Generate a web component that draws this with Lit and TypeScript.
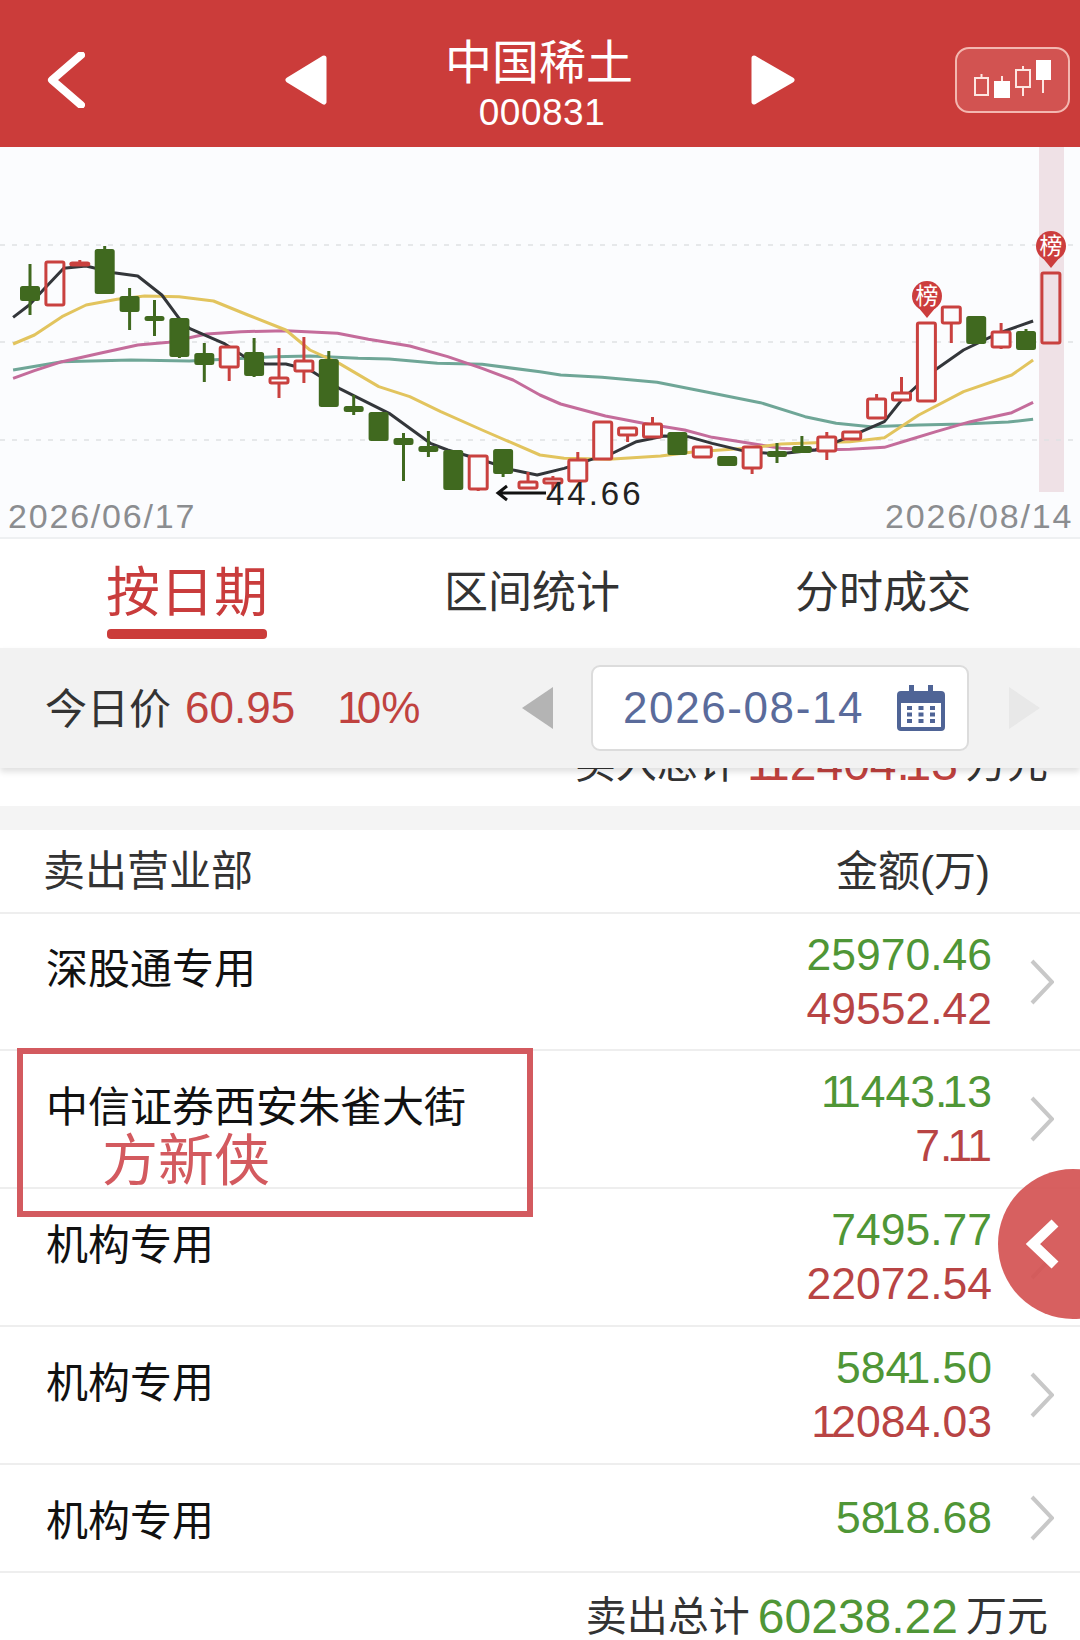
import { LitElement, html, svg, css } from "lit";
import { customElement } from "lit/decorators.js";
import { styleMap } from "lit/directives/style-map.js";

type Pt = [number, number];

// points were read off the left / right half of the chart
const left = (pts: Pt[]): Pt[] => pts.map(([x, y]) => [x / 2.904, y / 3 + 220]);
const right = (pts: Pt[]): Pt[] => pts.map(([x, y]) => [x / 2.904 + 540, y / 3 + 220]);

const MA_LINES: { color: string; pts: Pt[] }[] = [
  {
    color: "#6fa697",
    pts: [
      ...left([[38, 450], [180, 425], [380, 420], [550, 423], [800, 410], [900, 408], [1040, 415], [1130, 417], [1270, 430], [1400, 433], [1568, 455]]),
      ...right([[60, 465], [180, 472], [340, 487], [480, 515], [640, 548], [770, 590], [860, 610], [960, 620], [1100, 615], [1230, 612], [1360, 606], [1432, 598]]),
    ],
  },
  {
    color: "#c46c9b",
    pts: [
      ...left([[38, 475], [100, 452], [180, 425], [290, 400], [400, 375], [490, 367], [600, 342], [700, 335], [830, 332], [980, 340], [1070, 358], [1190, 378], [1300, 410], [1400, 445], [1490, 480], [1568, 525]]),
      ...right([[60, 552], [190, 588], [300, 610], [420, 630], [500, 652], [600, 668], [700, 685], [800, 690], [900, 688], [1000, 682], [1070, 660], [1150, 635], [1250, 605], [1370, 578], [1432, 547]]),
    ],
  },
  {
    color: "#e2c45e",
    pts: [
      ...left([[38, 372], [100, 345], [180, 290], [250, 255], [340, 238], [420, 228], [520, 230], [620, 243], [720, 285], [830, 330], [900, 390], [985, 430], [1100, 500], [1190, 530], [1280, 575], [1400, 630], [1568, 705]]),
      ...right([[70, 715], [200, 718], [350, 708], [450, 695], [600, 685], [700, 672], [800, 668], [900, 665], [1000, 653], [1100, 585], [1230, 515], [1370, 465], [1432, 420]]),
    ],
  },
  {
    color: "#33363a",
    pts: [
      ...left([[38, 292], [85, 255], [130, 205], [185, 145], [250, 138], [330, 158], [400, 168], [470, 225], [520, 295], [550, 325], [650, 370], [710, 410], [770, 432], [830, 432], [900, 450], [985, 505], [1130, 580], [1250, 670], [1300, 690], [1400, 720], [1490, 750], [1560, 765]]),
      ...right([[70, 745], [150, 718], [200, 705], [280, 665], [360, 648], [430, 650], [500, 670], [600, 695], [690, 702], [800, 690], [900, 650], [1000, 605], [1050, 540], [1140, 455], [1230, 390], [1330, 340], [1432, 303]]),
    ],
  },
];

// g/r, wick top, body top, body bottom, wick bottom, hollow see-through
const CANDLES: [string, number, number, number, number, boolean?][] = [
  ["g", 264, 287, 300, 315],
  ["r", 262, 262, 305, 305, true],
  ["r", 260, 263, 265, 265],
  ["g", 246, 250, 293, 293],
  ["g", 288, 297, 311, 330],
  ["g", 300, 317, 320, 336],
  ["g", 319, 319, 356, 358],
  ["g", 343, 354, 364, 382],
  ["r", 347, 347, 367, 381],
  ["g", 338, 353, 375, 377],
  ["r", 348, 378, 383, 398],
  ["r", 337, 361, 371, 383],
  ["g", 351, 360, 406, 406],
  ["g", 395, 407, 411, 415],
  ["g", 413, 413, 440, 440],
  ["g", 433, 439, 444, 481],
  ["g", 431, 447, 451, 457],
  ["g", 451, 451, 489, 489],
  ["r", 456, 456, 489, 491],
  ["g", 450, 450, 473, 477],
  ["r", 472, 482, 488, 488],
  ["r", 476, 479, 483, 491],
  ["r", 452, 460, 481, 481],
  ["r", 422, 422, 459, 459],
  ["r", 428, 428, 435, 442],
  ["r", 417, 424, 437, 437],
  ["g", 433, 433, 454, 454],
  ["r", 447, 447, 457, 457],
  ["g", 456, 457, 465, 466],
  ["r", 447, 447, 468, 474],
  ["g", 443, 452, 456, 463],
  ["g", 436, 447, 452, 452],
  ["r", 432, 437, 451, 460],
  ["r", 431, 432, 439, 439],
  ["r", 394, 399, 418, 418],
  ["r", 377, 393, 400, 400],
  ["r", 323, 323, 401, 401],
  ["r", 307, 307, 323, 343],
  ["g", 317, 317, 343, 343],
  ["r", 323, 332, 347, 349],
  ["g", 329, 332, 349, 349],
  ["r", 273, 273, 343, 343, true],
];

const ROWS = [
  { name: "深股通专用", buy: "25970.46", sell: "49552.42", kind: "first" },
  { name: "中信证券西安朱雀大街", buy: "11443.13", sell: "7.11", kind: "" },
  { name: "机构专用", buy: "7495.77", sell: "22072.54", kind: "" },
  { name: "机构专用", buy: "5841.50", sell: "12084.03", kind: "" },
  { name: "机构专用", buy: "5818.68", sell: "", kind: "single" },
];

// the app's numerals have a narrow 1, Liberation's are tabular:
// pull in whatever stands before a 1, and a leading 1 itself
const num = (s: string) =>
  [...s].map((c, i) => {
    const tight = (s[i + 1] === "1" ? 1 : 0) + (i === 0 && c === "1" ? 1 : 0);
    return tight ? html`<span style=${styleMap({ letterSpacing: `${-0.11 * tight}em` })}>${c}</span>` : c;
  });

@customElement("k-chart")
export class KChart extends LitElement {
  private pin(x: number, top: number) {
    return svg`
      <circle class="pin" cx=${x} cy=${top + 14} r="15"></circle>
      <path class="pin" d="M${x - 9} ${top + 25}L${x} ${top + 36}L${x + 9} ${top + 25}z"></path>
      <text class="pin-text" x=${x} y=${top + 22} text-anchor="middle">榜</text>
    `;
  }

  render() {
    return html`
      <svg width="1080" height="390" viewBox="0 147 1080 390">
        <rect class="band" x="1039" y="147" width="25" height="345"></rect>
        ${[245, 342, 440].map((y) => svg`<line class="grid" x1="0" x2="1080" y1=${y} y2=${y}></line>`)}
        ${MA_LINES.map((l) => svg`<polyline class="ma" stroke=${l.color} points=${l.pts.map((p) => p.join(",")).join(" ")}></polyline>`)}
        ${CANDLES.map(([c, wt, bt, bb, wb, hollow], i) => {
          const x = 30 + 24.9 * i;
          return svg`
            <line class="wick ${c}" x1=${x} x2=${x} y1=${wt} y2=${bt}></line>
            <line class="wick ${c}" x1=${x} x2=${x} y1=${bb} y2=${wb}></line>
            <rect class="body ${c} ${hollow ? "hollow" : ""}" x=${x - 9} y=${bt} width="18" height=${bb - bt} rx="1.5"></rect>
          `;
        })}
        <path class="arrow" d="M546 493H498M507 486l-9 7 9 7"></path>
        <text class="low" x="546" y="505">44.66</text>
        <text class="date" x="8" y="528">2026/06/17</text>
        <text class="date" x="885" y="528">2026/08/14</text>
        ${this.pin(927, 282)}
        ${this.pin(1051, 232)}
      </svg>
    `;
  }

  static styles = css`
    :host {
      display: block;
      height: 390px;
      background: #fbfcfe;
    }
    svg {
      display: block;
    }
    .band {
      fill: #efe1e6;
    }
    .grid {
      stroke: #dfe1e4;
      stroke-width: 1.5;
      stroke-dasharray: 5 7;
    }
    .ma {
      fill: none;
      stroke-width: 3;
      stroke-linejoin: round;
    }
    .wick {
      stroke-width: 3;
    }
    .wick.g {
      stroke: #40691f;
    }
    .wick.r {
      stroke: #c9413f;
    }
    .body.g {
      fill: #40691f;
      stroke: #40691f;
      stroke-width: 2;
    }
    .body.r {
      fill: #fbfcfe;
      stroke: #c9413f;
      stroke-width: 3;
    }
    .body.r.hollow {
      fill: none;
    }
    .arrow {
      fill: none;
      stroke: #111;
      stroke-width: 3;
    }
    .low {
      font: 33px "Liberation Sans", sans-serif;
      letter-spacing: 3px;
      fill: #222;
    }
    .date {
      font: 34px "Liberation Sans", sans-serif;
      letter-spacing: 1.8px;
      fill: #8b8d90;
    }
    .pin {
      fill: #cc3d3d;
    }
    .pin-text {
      font: 23px "Noto Sans CJK SC", sans-serif;
      fill: #fff;
    }
  `;
}

@customElement("app-root")
export class AppRoot extends LitElement {
  render() {
    return html`
      <header class="top">
        <div class="back">
          <svg width="38" height="56" viewBox="0 0 38 56"><path d="M34 3 5 28l29 25"></path></svg>
        </div>
        <svg class="tri" width="43" height="50" viewBox="0 0 43 50"><path d="M40 3 4 25l36 22z"></path></svg>
        <div class="title">
          <div class="name">中国稀土</div>
          <div class="code">000831</div>
        </div>
        <svg class="tri" width="44" height="50" viewBox="0 0 44 50"><path d="M3 3l38 22L3 47z"></path></svg>
        <div class="switch-wrap">
          <div class="switch">
            <svg width="115" height="66" viewBox="15 12 115 66">
              <path class="outline" d="M35 43h13v17H35zM41.500 39v4M76 35h14v17H76zM83 31v4M83 52v9"></path>
              <path class="solid" d="M54 46h16v17H54zM96 25h15v20H96z"></path>
              <path class="outline" d="M62 41v5M103 45v13"></path>
            </svg>
          </div>
        </div>
      </header>

      <k-chart></k-chart>

      <nav class="tabs">
        <div class="tab active"><span>按日期</span><i></i></div>
        <div class="tab"><span>区间统计</span></div>
        <div class="tab"><span>分时成交</span></div>
      </nav>

      <div class="toolbar">
        <span class="today">今日价</span>
        <span class="price">60.95</span>
        <span class="pct">${num("10%")}</span>
        <svg class="prev" width="31" height="42" viewBox="0 0 31 42"><path d="M31 0 0 21l31 21z"></path></svg>
        <div class="datebox">
          <span>2026-08-14</span>
          <svg width="48" height="46" viewBox="0 0 48 46">
            <path class="cal" d="M4 6h8V0h5v6h14V0h5v6h8a4 4 0 0 1 4 4v32a4 4 0 0 1-4 4H4a4 4 0 0 1-4-4V10a4 4 0 0 1 4-4z"></path>
            <rect class="cal-in" x="4" y="18" width="40" height="24"></rect>
            ${[0, 1, 2].flatMap((r) =>
              [0, 1, 2].map((c) => svg`<rect class="cal" x=${10 + c * 11.5} y=${21 + r * 6.5} width="5" height="4"></rect>`)
            )}
          </svg>
        </div>
        <svg class="next" width="31" height="42" viewBox="0 0 31 42"><path d="M0 0l31 21L0 42z"></path></svg>
      </div>

      <div class="clipped">
        <div class="total">买入总计<b class="red">${num("112404.13")}</b>万元</div>
      </div>
      <div class="gap"></div>

      <div class="thead"><span>卖出营业部</span><span>金额(万)</span></div>
      ${ROWS.map(
        (r) => html`
          <div class="row ${r.kind}">
            <div class="label">${r.name}</div>
            <div class="nums">
              <div class="buy">${num(r.buy)}</div>
              ${r.sell ? html`<div class="sell">${num(r.sell)}</div>` : ""}
            </div>
            <svg class="more" width="24" height="46" viewBox="0 0 24 46"><path d="M2 2l20 21L2 44"></path></svg>
          </div>
        `
      )}
      <div class="total bottom">卖出总计<b class="green">60238.22</b>万元</div>

      <div class="mark">方新侠</div>
      <div class="fab">
        <svg width="36" height="50" viewBox="0 0 36 50"><path d="M30 4 8 25l22 21"></path></svg>
      </div>
    `;
  }

  static styles = css`
    :host {
      display: block;
      position: relative;
      width: 1080px;
      height: 1640px;
      overflow: hidden;
      background: #fff;
      font-family: "Liberation Sans", "Noto Sans CJK SC", sans-serif;
      color: #333;
    }
    .top {
      display: grid;
      grid-template-columns: 284px 43px 1fr 44px 285px;
      align-items: center;
      height: 147px;
      box-sizing: border-box;
      padding-top: 12px;
      background: #cb3c3a;
      color: #fff;
    }
    .back {
      padding-left: 47px;
      line-height: 0;
    }
    .back path {
      fill: none;
      stroke: #fff;
      stroke-width: 8;
      stroke-linecap: round;
      stroke-linejoin: round;
    }
    .tri path {
      fill: #fff;
      stroke: #fff;
      stroke-width: 5;
      stroke-linejoin: round;
    }
    .title {
      padding-top: 4px;
      text-align: center;
    }
    .name {
      font-size: 47px;
      line-height: 62px;
      font-family: "Noto Sans CJK SC", sans-serif;
      font-weight: 400;
    }
    .code {
      padding-left: 6px;
      font-size: 37px;
      line-height: 46px;
      letter-spacing: 0.5px;
    }
    .switch-wrap {
      display: flex;
      justify-content: flex-end;
      padding-right: 10px;
    }
    .switch {
      width: 115px;
      height: 66px;
      box-sizing: border-box;
      border: 2px solid #f3b7b0;
      border-radius: 14px;
      background: #d25351;
      display: flex;
      align-items: center;
      justify-content: center;
    }
    .switch svg {
      flex: none;
    }
    .outline {
      fill: none;
      stroke: #fde6e2;
      stroke-width: 2;
    }
    .solid {
      fill: #fff;
    }
    k-chart {
      border-bottom: 2px solid #eef0f2;
    }
    .tabs {
      display: grid;
      grid-template-columns: 374px 316px 386px;
      height: 109px;
      box-sizing: border-box;
      padding-top: 24px;
    }
    .tab {
      display: flex;
      flex-direction: column;
      align-items: center;
      font-size: 44px;
      line-height: 60px;
    }
    .tab.active {
      font-size: 54px;
      color: #c93c3c;
    }
    .tab i {
      width: 160px;
      height: 10px;
      margin-top: 6px;
      border-radius: 4px;
      background: #cb3c3a;
    }
    .toolbar {
      position: relative;
      z-index: 1;
      display: flex;
      align-items: center;
      height: 120px;
      box-sizing: border-box;
      padding: 0 40px 0 45px;
      background: #f2f2f2;
      box-shadow: 0 4px 6px rgba(0, 0, 0, 0.12);
      font-size: 42px;
    }
    .today {
      padding-bottom: 6px;
    }
    .price,
    .pct {
      font-size: 44px;
      color: #c0423f;
    }
    .price {
      margin-left: 14px;
    }
    .pct {
      margin-left: 42px;
    }
    .prev {
      margin-left: auto;
      fill: #b4b4b4;
    }
    .next {
      margin-left: 40px;
      fill: #e8e8e8;
    }
    .datebox {
      display: flex;
      align-items: center;
      justify-content: space-between;
      width: 378px;
      height: 86px;
      box-sizing: border-box;
      margin-left: 38px;
      padding: 0 22px 0 30px;
      background: #fff;
      border: 2px solid #dcdcdc;
      border-radius: 9px;
      font-size: 44px;
      letter-spacing: 1.6px;
      color: #5a6b9b;
    }
    .cal {
      fill: #4f6496;
    }
    .cal-in {
      fill: #fff;
    }
    .clipped {
      height: 38px;
      overflow: hidden;
    }
    .clipped .total {
      margin-top: -31px;
    }
    .total {
      display: flex;
      justify-content: flex-end;
      align-items: center;
      padding-right: 32px;
      font-size: 41px;
      line-height: 54px;
    }
    .total b {
      margin: 0 8px;
      font-size: 48px;
      font-weight: 400;
    }
    .bottom {
      padding-top: 17px;
    }
    .red {
      color: #c0423f;
    }
    .green {
      color: #4f9636;
    }
    .gap {
      height: 24px;
      background: #f4f4f4;
    }
    .thead {
      display: flex;
      justify-content: space-between;
      align-items: center;
      height: 84px;
      box-sizing: border-box;
      padding: 0 90px 8px 43px;
      border-bottom: 2px solid #eee;
      font-size: 42px;
    }
    .row {
      display: flex;
      align-items: center;
      height: 138px;
      box-sizing: border-box;
      padding-right: 26px;
      border-bottom: 2px solid #eee;
    }
    .row.first {
      height: 137px;
    }
    .row.single {
      height: 108px;
    }
    .label {
      flex: 1;
      padding: 0 0 32px 46px;
      font-size: 42px;
      color: #111;
    }
    .single .label {
      padding-bottom: 2px;
    }
    .nums {
      text-align: right;
      font-size: 44.5px;
      line-height: 54px;
    }
    .buy {
      color: #4f9636;
    }
    .sell {
      color: #b84444;
    }
    .more {
      flex: none;
      margin-left: 38px;
    }
    .more path {
      fill: none;
      stroke: #c8c8c8;
      stroke-width: 4;
    }
    .mark {
      position: absolute;
      left: 17px;
      top: 1048px;
      width: 516px;
      height: 169px;
      box-sizing: border-box;
      padding: 80px 0 0 79px;
      border: 6px solid #d35a5f;
      font-size: 56px;
      line-height: 54px;
      color: #d35a5f;
    }
    .fab {
      position: absolute;
      left: 998px;
      top: 1169px;
      width: 150px;
      height: 150px;
      border-radius: 50%;
      background: rgba(212, 82, 82, 0.92);
      display: flex;
      align-items: center;
      padding-left: 27px;
      box-sizing: border-box;
    }
    .fab path {
      fill: none;
      stroke: #fff;
      stroke-width: 10;
    }
  `;
}
